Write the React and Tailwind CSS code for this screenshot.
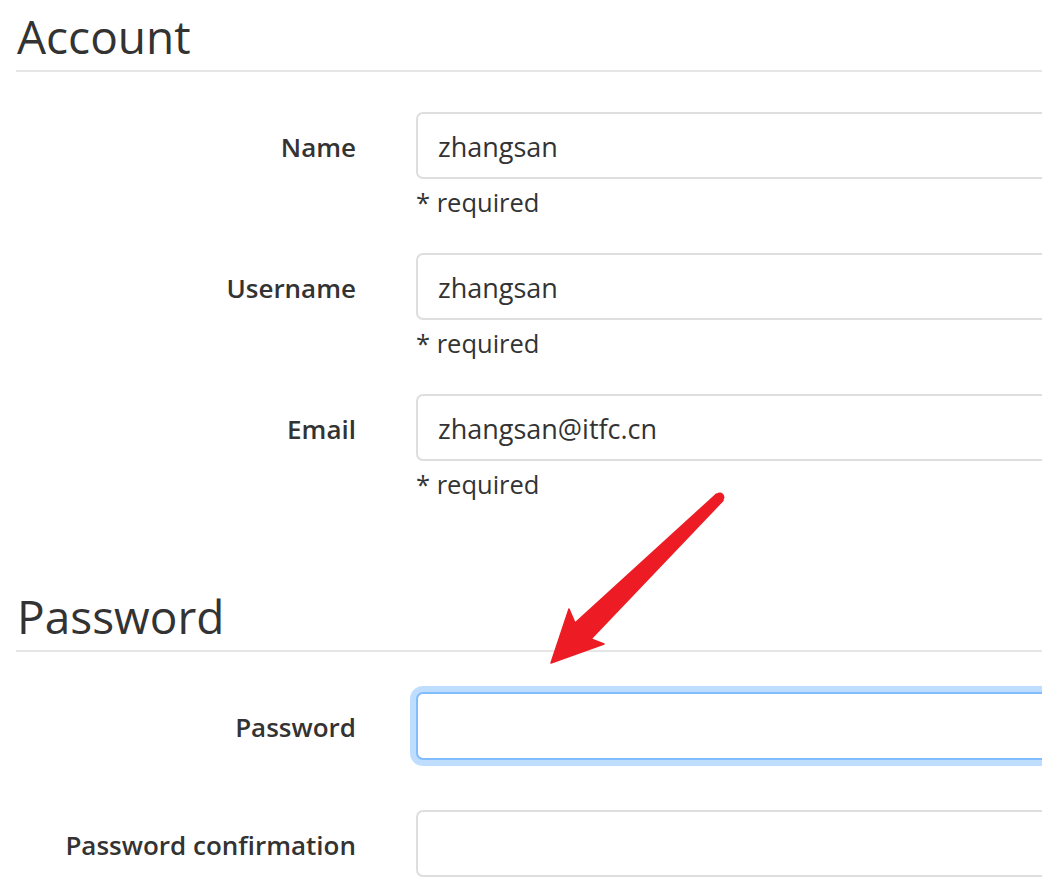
import React from "react";

const font = { fontFamily: '"Open Sans", "Noto Sans", sans-serif' };

function Heading({ children }) {
  return (
    <div className="pt-[7px] pb-[5px] border-b-2 border-[#e6e6e6]">
      <h2 className="text-[46px] leading-[58px] font-normal text-[#333] pl-px">{children}</h2>
    </div>
  );
}

function Row({ label, value, required, focused, extra }) {
  return (
    <div className={`flex items-start ${extra || ""}`}>
      <div className="w-[356px] shrink-0 h-[67px] pt-[4px] flex items-center justify-end text-[26px] font-semibold text-[#333] whitespace-nowrap">
        {label}
      </div>
      <div className="ml-[60px] w-[700px] shrink-0 flex flex-col">
        <div
          className={
            focused
              ? "h-[68px] w-[700px] rounded-[7px] border-[2px] border-[#80bdff] shadow-[0_0_0_6px_rgba(0,123,255,0.25)] bg-white"
              : "h-[67px] w-[700px] rounded-[7px] border-[2px] border-[#dedede] bg-white flex items-center pl-[20px] pt-[4px] text-[27px] text-[#333]"
          }
        >
          {value}
        </div>
        {required && (
          <div className="mt-[5px] leading-[36px] text-[25.5px] text-[#333]">* required</div>
        )}
      </div>
    </div>
  );
}

export default function App() {
  return (
    <div className="relative w-[1042px] h-[893px] overflow-hidden bg-white" style={font}>
      <div className="pl-[16px]">
        <Heading>Account</Heading>
      </div>
      <div className="mt-[40px]">
        <Row label="Name" value="zhangsan" required extra="mb-[33px]" />
        <Row label="Username" value="zhangsan" required extra="mb-[33px]" />
        <Row label="Email" value="zhangsan@itfc.cn" required />
      </div>
      <div className="mt-[78px] pl-[16px]">
        <Heading>Password</Heading>
      </div>
      <div className="mt-[40px]">
        <Row label="Password" focused extra="mb-[50px]" />
        <Row label="Password confirmation" />
      </div>
      <svg className="absolute left-0 top-0 pointer-events-none" width="1042" height="893" viewBox="0 0 1042 893">
        <polygon
          points="716.5,494 575,623 569,609 551,663 604,644 591,639 723,500.5"
          fill="#ed1c24"
          stroke="#ed1c24"
          strokeWidth="1.5"
          strokeLinejoin="round"
        />
        <circle cx="719.8" cy="497.2" r="4.6" fill="#ed1c24" />
      </svg>
    </div>
  );
}
